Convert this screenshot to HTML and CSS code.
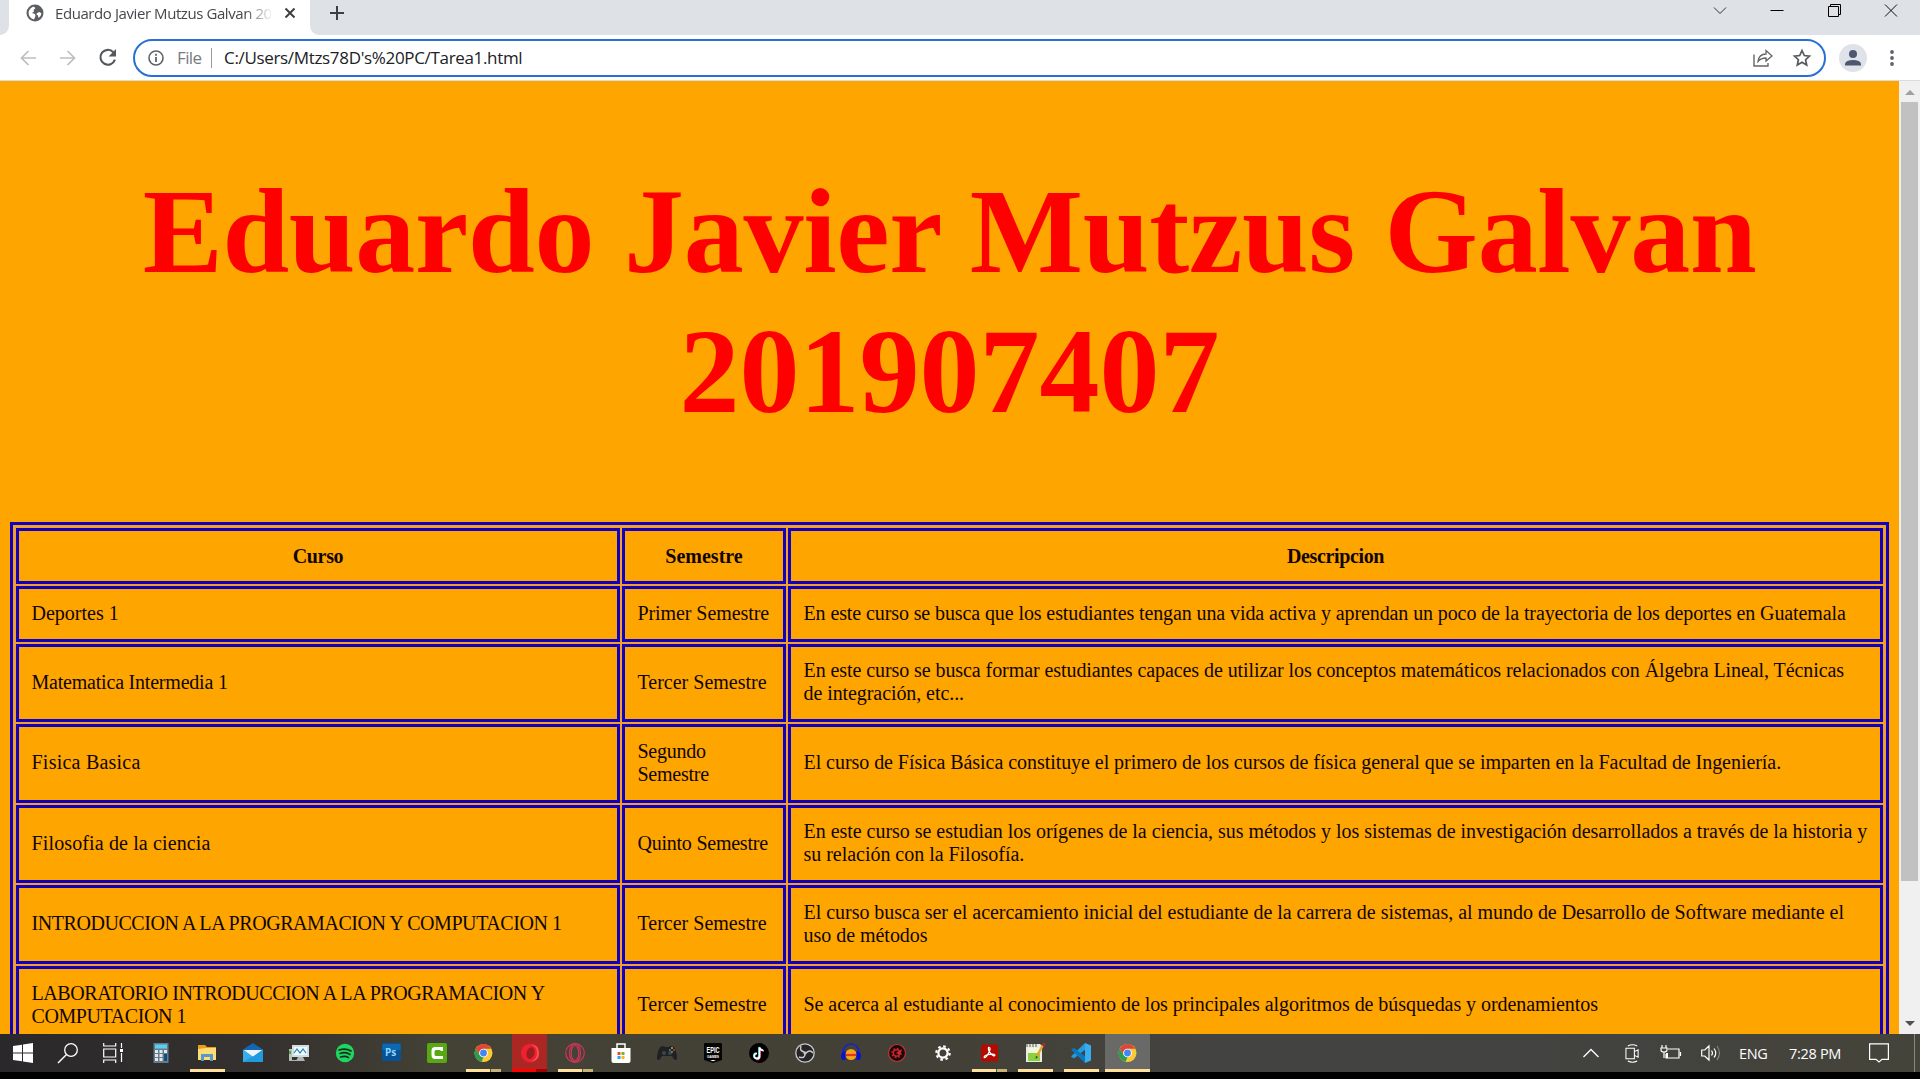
FILE: index.html
```html
<!DOCTYPE html>
<html lang="es">
<head>
<meta charset="utf-8">
<title>Eduardo Javier Mutzus Galvan 201907407</title>
<link rel="stylesheet" href="styles.css">
</head>
<body>
<header class="tabs">
  <div class="stub"></div>
  <div class="tab">
    <svg class="globe" viewBox="0 0 18 18"><circle cx="9" cy="9" r="8.500" fill="#5a5e63"/><path d="M2.500 8q1-4 5-5.500l2 1.500-2 2 .5 1.500-2 1.500 3 1 .5 2-1.500 3.500Q2.500 14 2.500 8zM11 9l2.500-1 2 1.500q-.5 3-3 4.500l-.5-2.500-1.500-1z" fill="#fff"/></svg>
    <span class="tabtitle">Eduardo Javier Mutzus Galvan 20</span>
    <svg class="close" viewBox="0 0 12 12"><path d="M1.500 1.500l9 9m0-9l-9 9" stroke="#3c4043" stroke-width="2"/></svg>
  </div>
  <div class="strip">
    <svg class="plus" viewBox="0 0 14 14"><path d="M7 0v14M0 7h14" stroke="#3c4043" stroke-width="2"/></svg>
    <div class="windowbuttons">
      <svg viewBox="0 0 14 14"><path d="M1 3.500l6 6 6-6" fill="none" stroke="#333"/></svg>
      <svg viewBox="0 0 14 14"><path d="M.5 6.500h13" stroke="#000"/></svg>
      <svg viewBox="0 0 14 14"><path d="M1.500 2.500h10v10h-10zM3.500 2V.5h10v10H12" fill="none" stroke="#000"/></svg>
      <svg viewBox="0 0 14 14"><path d="M1 .5l12 12M13 .5L1 12.500" stroke="#111"/></svg>
    </div>
  </div>
</header>
<nav class="toolbar">
  <svg class="nav" viewBox="0 0 16 16"><path d="M16 8H1.500M8.500 1L1.500 8l7 7" fill="none" stroke="#bcbec1" stroke-width="1.700"/></svg>
  <svg class="nav" viewBox="0 0 16 16"><path d="M0 8h14.500M7.500 1l7 7-7 7" fill="none" stroke="#bcbec1" stroke-width="1.700"/></svg>
  <svg class="nav reload" viewBox="0 0 16 16"><path d="M13.500 3A7 7 0 1 0 15 10" fill="none" stroke="#54585c" stroke-width="2"/><path d="M16 0v7H9z" fill="#54585c"/></svg>
  <div class="address">
    <svg class="info" viewBox="0 0 16 16"><circle cx="8" cy="8" r="7" fill="none" stroke="#5f6368" stroke-width="1.600"/><path d="M8 7v5M8 3.800v2" stroke="#5f6368" stroke-width="1.800"/></svg>
    <span class="scheme">File</span><span class="divider"></span><span class="url">C:/Users/Mtzs78D's%20PC/Tarea1.html</span>
    <svg class="share" viewBox="0 0 20 18"><path d="M1 5.500V17h14v-3" fill="none" stroke="#666" stroke-width="1.400"/><path d="M5 12.500Q6 5 13 5V1.500l6 5.500-6 5V9q-5 0-8 3.500z" fill="none" stroke="#666" stroke-width="1.300"/></svg>
    <svg class="star" viewBox="0 0 18 18"><path d="M9 1.500l2.300 5 5.200.6-3.900 3.600 1.100 5.300L9 13.300 4.300 16l1.100-5.300L1.500 7.100l5.200-.6z" fill="none" stroke="#555a5e" stroke-width="1.700"/></svg>
  </div>
  <svg class="profile" viewBox="0 0 28 28"><circle cx="14" cy="14" r="14" fill="#dfe3e9"/><circle cx="14" cy="10" r="4" fill="#4c5870"/><path d="M6 21.500v-1.800q1-3.700 8-3.700t8 3.700v1.800z" fill="#4c5870"/></svg>
  <svg class="dots" viewBox="0 0 4 16"><g fill="#5f6368"><circle cx="2" cy="2" r="1.900"/><circle cx="2" cy="8" r="1.900"/><circle cx="2" cy="14" r="1.900"/></g></svg>
</nav>
<div class="viewport">
  <main class="page">
    <h1 class="heading"><span class="name">Eduardo Javier Mutzus Galvan</span><br>201907407</h1>
    <table class="courses">
      <colgroup><col class="c1"><col class="c2"><col class="c3"></colgroup>
      <tr class="short"><th class="snug">Curso</th><th>Semestre</th><th class="snug">Descripcion</th></tr>
      <tr class="short sports"><td>Deportes 1</td><td>Primer Semestre</td><td>En este curso se busca que los estudiantes tengan una vida activa y aprendan un poco de la trayectoria de los deportes en Guatemala</td></tr>
      <tr class="mid maths"><td>Matematica Intermedia 1</td><td>Tercer Semestre</td><td>En este curso se busca formar estudiantes capaces de utilizar los conceptos matemáticos relacionados con Álgebra Lineal, Técnicas<br>de integración, etc...</td></tr>
      <tr class="tall physics"><td>Fisica Basica</td><td>Segundo<br>Semestre</td><td>El curso de Física Básica constituye el primero de los cursos de física general que se imparten en la Facultad de Ingeniería.</td></tr>
      <tr class="mid philosophy"><td>Filosofia de la ciencia</td><td>Quinto Semestre</td><td>En este curso se estudian los orígenes de la ciencia, sus métodos y los sistemas de investigación desarrollados a través de la historia y<br>su relación con la Filosofía.</td></tr>
      <tr class="tall programming"><td>INTRODUCCION A LA PROGRAMACION Y COMPUTACION 1</td><td>Tercer Semestre</td><td>El curso busca ser el acercamiento inicial del estudiante de la carrera de sistemas, al mundo de Desarrollo de Software mediante el<br>uso de métodos</td></tr>
      <tr class="tall lab"><td>LABORATORIO INTRODUCCION A LA PROGRAMACION Y<br>COMPUTACION 1</td><td>Tercer Semestre</td><td>Se acerca al estudiante al conocimiento de los principales algoritmos de búsquedas y ordenamientos</td></tr>
    </table>
  </main>
  <div class="scrollbar">
    <svg viewBox="0 0 10 5"><path d="M0 5l5-5 5 5z" fill="#a0a0a0"/></svg>
    <div class="thumb"></div>
    <svg viewBox="0 0 10 5"><path d="M0 0l5 5 5-5z" fill="#505050"/></svg>
  </div>
</div>
<footer class="taskbar">
  <div class="slot system"><svg viewBox="0 0 20 20"><path d="M0 3l9-1.300v7.800H0zM10 1.500L20 0v9.500H10zM0 10.500h9v7.800L0 17zM10 10.500h10V20l-10-1.500z" fill="#fff"/></svg></div>
  <div class="slot system"><svg viewBox="0 0 20 20"><circle cx="13" cy="7" r="6.300" fill="none" stroke="#fff" stroke-width="1.300"/><path d="M8.500 11.500L0 20" stroke="#fff" stroke-width="1.500"/></svg></div>
  <div class="slot system"><svg viewBox="0 0 20 20"><path d="M.7 0v3h12V0M.7 6h12v8h-12zM.7 20v-3h12v3M18.500 0v5M18.500 10v9" fill="none" stroke="#fff" stroke-width="1.200"/><path d="M17 6h3v3h-3z" fill="#fff"/></svg></div>
  <div class="slot first"><svg viewBox="0 0 20 20"><path d="M2.500 0h15v20h-15z" fill="#667c8b"/><path d="M4 1.500h12v4H4z" fill="#58d0f2"/><path d="M4 7h3v3H4zM8.500 7h3v3h-3zM13 7h3v3h-3zM4 11h3v3H4zM8.500 11h3v3h-3zM4 15h3v3H4zM8.500 15h3v3h-3z" fill="#e1e7ea"/><path d="M13 11h3v7h-3z" fill="#084f8b"/></svg></div>
  <div class="slot open"><svg viewBox="0 0 20 20"><path d="M1 2h7l2 2h9v13H1z" fill="#e4a116"/><path d="M1 6l8-1h10v12H1z" fill="#ffdc75"/><path d="M4 18v-7h12v7h-3v-4H7v4z" fill="#529cc9"/></svg></div>
  <div class="slot"><svg viewBox="0 0 20 20"><path d="M0 6.500L10 0l10 6.500V13H0z" fill="#1266b4"/><path d="M1 7h18l-9 7z" fill="#eef5fa"/><path d="M0 6.500l10 7 10-7V19H0z" fill="#35aeea"/><path d="M0 19l20-12.500V19z" fill="#209be0"/><path d="M1 7h18l-9 6.500z" fill="#eef5fa"/></svg></div>
  <div class="slot"><svg viewBox="0 0 20 20"><path d="M0 6h3v11H0z" fill="#b4c4b9"/><path d="M3 2h17v12H3z" fill="#d5dce0"/><path d="M5 4h13v8H5z" fill="#edf8ff"/><path d="M5 10l3-4 3 4 3-4 3 4" fill="none" stroke="#2385b9" stroke-width="1.200"/><path d="M9 14h5l2 4H7zM0 17h8v1H0z" fill="#aeb4b8"/><path d="M0 8h2v3H0z" fill="#4ca543"/></svg></div>
  <div class="slot"><svg viewBox="0 0 20 20"><circle cx="10" cy="10" r="9.200" fill="#1ed760"/><path d="M4 7q7-2 12 1M5 10.500q6-2 10 1M5.500 14q5-1.500 8 .6" fill="none" stroke="#172d1c" stroke-width="1.700" stroke-linecap="round"/></svg></div>
  <div class="slot"><svg viewBox="0 0 20 20"><rect x="1" y="0" width="19" height="18" rx="1" fill="#075297"/><path d="M1.500 1h18v6h-18z" fill="#0d68b2"/><text x="4" y="12.500" class="ps">Ps</text></svg></div>
  <div class="slot"><svg viewBox="0 0 20 20"><rect width="20" height="20" rx="2" fill="#57a812"/><path d="M16 8V4H8Q4.500 4 4.500 8v4q0 4 3.500 4h8v-3H9q-1.500 0-1.500-1.500v-3Q7.500 7 9 7h4l1 1z" fill="#fff"/></svg></div>
  <div class="slot open multi"><svg class="chrome" viewBox="0 0 20 20"><circle cx="10" cy="10" r="9.500" fill="#fcca35"/><path d="M1.800 5.200A9.500 9.500 0 0 1 18.200 5.500H10L5.800 12z" fill="#df4638"/><path d="M1.800 5.200l4.300 7.200L10 14.500l-2 4.800A9.500 9.500 0 0 1 1.800 5.200z" fill="#2d9c51"/><circle cx="10" cy="10" r="4.600" fill="#fff"/><circle cx="10" cy="10" r="3.600" fill="#4285f4"/></svg></div>
  <div class="slot open multi opera"><svg viewBox="0 0 20 20"><ellipse cx="10" cy="10" rx="9" ry="9.300" fill="#f0202f"/><path d="M11 1q8 1 8 9t-8 9q6-3 6-9t-6-9z" fill="#fa5052"/><ellipse cx="10.500" cy="10" rx="4" ry="6" fill="#9b1f20" transform="rotate(15 10 10)"/></svg></div>
  <div class="slot open multi"><svg viewBox="0 0 20 20"><g fill="none" stroke="#d2345b" stroke-width="1.200"><circle cx="10" cy="10" r="9.300"/><ellipse cx="10" cy="10" rx="5.500" ry="9"/><ellipse cx="10" cy="10" rx="3.800" ry="7.500"/></g></svg></div>
  <div class="slot"><svg viewBox="0 0 20 20"><path d="M6 6V1h8v5" fill="none" stroke="#fff" stroke-width="1.500"/><path d="M.5 5h19v13q0 2-2 2h-15q-2 0-2-2z" fill="#fff"/><path d="M6.500 9h3v3h-3z" fill="#e94f27"/><path d="M10.500 9h3v3h-3z" fill="#7db522"/><path d="M6.500 13h3v3h-3z" fill="#28a5df"/><path d="M10.500 13h3v3h-3z" fill="#f9b723"/></svg></div>
  <div class="slot"><svg viewBox="0 0 20 20"><path d="M3 4l4-1 1 1h4l1-1 4 1q3 5 3 12-2 3-5-3H5q-3 6-5 3Q0 9 3 4z" fill="#202124"/><circle cx="7" cy="10" r="2" fill="#444"/><circle cx="13" cy="10" r="2" fill="#444"/><circle cx="15" cy="5" r=".9" fill="#e9b532"/><circle cx="17" cy="7" r=".9" fill="#d54436"/><circle cx="13" cy="7" r=".9" fill="#3c93d4"/><circle cx="15" cy="9" r=".9" fill="#50b76c"/></svg></div>
  <div class="slot"><svg viewBox="0 0 20 20"><path d="M1 1q0-1 1-1h16q1 0 1 1v16l-9 3-9-3z" fill="#050505"/><text x="3.500" y="10" textLength="13" lengthAdjust="spacingAndGlyphs" class="epic">EPIC</text><text x="4" y="15" textLength="12" lengthAdjust="spacingAndGlyphs" class="games">GAMES</text><path d="M7 17h6l-3 1.200z" fill="#fff"/></svg></div>
  <div class="slot"><svg viewBox="0 0 20 20"><circle cx="10" cy="10" r="10" fill="#000"/><g fill="none" stroke-width="1.700"><path d="M10 4v9a2.600 2.600 0 1 1-2.500-3M10 4q1 3 4 3" stroke="#28ddd9"/><path d="M11 5v9a2.600 2.600 0 0 1-4 2M11 5q1 3 4 3" stroke="#f12b56"/><path d="M10.500 4.500v9a2.600 2.600 0 1 1-2.500-3M10.500 4.500q1 3 4 3" stroke="#fff"/></g></svg></div>
  <div class="slot"><svg viewBox="0 0 20 20"><circle cx="10" cy="10" r="9.200" fill="#252527" stroke="#c8c8c8" stroke-width="1.300"/><path d="M9.500 9Q4 8 6 3M11 10q4-4 7 0M10 11q0 5-6 3" fill="none" stroke="#c8c8c8" stroke-width="1.500"/><circle cx="10" cy="10" r="1.600" fill="#c8c8c8"/></svg></div>
  <div class="slot"><svg viewBox="0 0 20 20"><path d="M2 12V9a8 8 0 0 1 16 0v3" fill="none" stroke="#1421d5" stroke-width="1.600"/><circle cx="10" cy="11.500" r="5.500" fill="#f2a51c"/><path d="M5 12h10" stroke="#e73518" stroke-width="2.200" fill="none"/><path d="M0 13q0-4 4.500-5v9H2q-2-1-2-4zM20 13q0-4-4.500-5v9H18q2-1 2-4z" fill="#0b12cf"/></svg></div>
  <div class="slot"><svg viewBox="0 0 20 20"><circle cx="10" cy="10" r="8.500" fill="#180b0c" stroke="#ca3035" stroke-width="1.200"/><circle cx="9.500" cy="10" r="3.200" fill="none" stroke="#c4232a" stroke-width="1.500"/><circle cx="9.500" cy="10" r="4.500" fill="none" stroke="#c4232a" stroke-width="1.500" stroke-dasharray="1.800 1.700"/><path d="M9 10l6-4-2 6z" fill="#d8272f"/></svg></div>
  <div class="slot"><svg class="gear" viewBox="0 0 20 20"><circle cx="10" cy="10" r="5.800" fill="none" stroke="#fff" stroke-width="2.800"/><circle cx="10" cy="10" r="8.300" fill="none" stroke="#fff" stroke-width="2.800" stroke-dasharray="3.260 3.260"/></svg></div>
  <div class="slot open multi"><svg class="pdf" viewBox="0 0 20 20"><rect x="1" y="1" width="18" height="18" rx="3" fill="#b30b00"/><path d="M9 4q3 0 .5 5Q7 15 4.500 15q-1-2 4-3.200 6-1.500 7.200.5-.5 2-4-1.300Q8 7 9 4z" fill="none" stroke="#fff" stroke-width="1.300"/></svg></div>
  <div class="slot open"><svg viewBox="0 0 20 20"><path d="M1 1h14l2 2v16H1z" fill="#e7ece6"/><path d="M3 8h12v10H3z" fill="#8bd03e"/><path d="M3 5h12v5H3z" fill="#f4f6d9"/><path d="M2 1v3M5 1v3M8 1v3M11 1v3" stroke="#555"/><path d="M12 13l6-11" stroke="#e6a22b" stroke-width="2.500"/><path d="M18 3l1.500-3" stroke="#b4292a" stroke-width="2.500"/><path d="M10.500 16l.5-3 2 1z" fill="#333"/></svg></div>
  <div class="slot open"><svg viewBox="0 0 20 20"><path d="M0 13.500L14 0l1 6L3 15.500z" fill="#239be1"/><path d="M0 6.500l3-1.500L15 14l-1 6z" fill="#087ac3"/><path d="M14 0l6 2.500v15L14 20z" fill="#38aef0"/></svg></div>
  <div class="slot open active"><svg class="chrome" viewBox="0 0 20 20"><circle cx="10" cy="10" r="9.500" fill="#fcca35"/><path d="M1.800 5.200A9.500 9.500 0 0 1 18.200 5.500H10L5.800 12z" fill="#df4638"/><path d="M1.800 5.200l4.300 7.200L10 14.500l-2 4.800A9.500 9.500 0 0 1 1.800 5.200z" fill="#2d9c51"/><circle cx="10" cy="10" r="4.600" fill="#fff"/><circle cx="10" cy="10" r="3.600" fill="#4285f4"/></svg></div>
  <div class="tray">
    <svg class="up" viewBox="0 0 16 10"><path d="M.5 9L8 1.500 15.500 9" fill="none" stroke="#fff" stroke-width="1.300"/></svg>
    <svg class="meet" viewBox="0 0 16 20"><path d="M1 4.500h9v11H1zM10 8l4-2v8l-4-2M3 2q5-2.500 10 0M3 18q5 2.500 10 0" fill="none" stroke="#fff" stroke-width="1.100"/></svg>
    <svg class="battery" viewBox="0 0 20 16"><path d="M7 4h11v9H5V9M19.500 7v4M1 0v3M5 0v3M0 3h6v2q0 2-3 2T0 5zM3 7v6" fill="none" stroke="#fff" stroke-width="1.200"/><path d="M5 8h2v5H5z" fill="#fff"/></svg>
    <svg class="sound" viewBox="0 0 20 16"><path d="M.7 5h3L8 1v14l-4.300-4h-3zM10.500 5.500q2 2.500 0 5M13 3.500q3.500 4.500 0 9" fill="none" stroke="#fff" stroke-width="1.200"/><path d="M16 1q5 7 0 14" fill="none" stroke="#888" stroke-width="1.100"/></svg>
    <span class="lang">ENG</span><span class="clock">7:28 PM</span>
    <svg class="notice" viewBox="0 0 20 20"><path d="M.6.8h18.800v15.500H13l-3 2.700-3-2.700H.6z" fill="none" stroke="#fff" stroke-width="1.200"/></svg>
    <span class="peek"></span>
  </div>
</footer>
</body>
</html>
```
FILE: styles.css
```css
* { box-sizing: border-box; }
body { margin: 0; width: 1920px; height: 1079px; overflow: hidden; background: #000; font-family: "Open Sans", sans-serif; display: flex; flex-direction: column; }
svg { display: block; flex: none; overflow: visible; }

/* Browser chrome */
.tabs { height: 35px; flex: none; background: #fff; display: flex; }
.stub { width: 9px; background: #dee1e6; border-bottom-right-radius: 9px; }
.tab { width: 281px; flex: 0 0 281px; display: flex; padding: 4px 0 0 17px; }
.globe { width: 18px; height: 18px; }
.tab { width: 301px; flex-basis: 301px; }
.tabtitle { width: 222px; flex: none; margin: -2px 0 0 11px; font-size: 15px; line-height: 22px; letter-spacing: -.42px; color: #45494d; white-space: nowrap; -webkit-mask-image: linear-gradient(90deg, #000 190px, transparent 218px); }
.close { width: 12px; height: 12px; margin: 3px 0 0 7px; }
.strip { flex: 1; background: #dee1e6; border-bottom-left-radius: 9px; display: flex; }
.plus { width: 14px; height: 14px; margin: 6px 0 0 20px; }
.windowbuttons { margin-left: auto; display: flex; gap: 43px; padding: 4px 22px 0 0; }
.windowbuttons svg { width: 14px; height: 14px; }
.toolbar { height: 46px; flex: none; background: #fff; display: flex; align-items: center; padding-left: 20px; border-bottom: 1px solid #dadce0; }
.nav { width: 16px; height: 16px; margin-right: 24px; }
.reload { width: 17px; height: 17px; margin: 0 17px 0 -1px; }
.address { width: 1693px; height: 38px; border: 2px solid #2870d8; border-radius: 19px; display: flex; align-items: center; padding: 0 13px; }
.info { width: 16px; height: 16px; }
.scheme, .url { font-size: 17px; line-height: 24px; white-space: nowrap; }
.scheme { color: #777b80; width: 24px; margin-left: 13px; letter-spacing: -.6px; }
.divider { width: 1px; height: 20px; background: #999; margin: 0 12px 0 10px; }
.url { color: #202124; letter-spacing: -.33px; }
.share { width: 20px; height: 18px; margin-left: auto; }
.star { width: 18px; height: 18px; margin: 0 0 0 20px; }
.profile { width: 28px; height: 28px; margin-left: 13px; }
.dots { width: 4px; height: 16px; margin-left: 23px; }

/* Document */
.viewport { height: 953px; height: 953px; flex: none; display: flex; overflow: hidden; }
.page { width: 1899px; background: #ffa500; padding: 0 10px; font: 20px/23px "Liberation Serif", serif; color: #100600; overflow: hidden; }
.heading { margin: 81px 0; height: 279px; font-size: 120px; line-height: 140px; text-align: center; color: #f00; white-space: nowrap; }
.name { letter-spacing: -.27px; }
.courses { width: 1879px; table-layout: fixed; background: #f2a128; border: 3px solid #1200bf; border-collapse: separate; border-spacing: 2px; padding: 1px; }
.c1 { width: 604px; }
.c2 { width: 164px; }
.c3 { width: 1095px; }
th, td { background: #ffa500; border: 3px solid #1200bf; text-align: left; white-space: nowrap; }
th { padding: 0 12.5px; text-align: center; }
td { padding: 0 12.5px 2px; }
.short { height: 56px; }
.mid { height: 78px; }
.tall { height: 79px; }

/* Tracking of each course row */
.snug { letter-spacing: -.35px; }
.sports td:nth-child(2) { letter-spacing: -.08px; }
.sports td:nth-child(3) { letter-spacing: -.103px; }
.maths td:nth-child(1) { letter-spacing: -.21px; }
.maths td:nth-child(3) { letter-spacing: -.076px; }
.physics td:nth-child(1) { letter-spacing: .23px; }
.physics td:nth-child(2) { letter-spacing: -.25px; }
.physics td:nth-child(3) { letter-spacing: -.052px; }
.philosophy td:nth-child(1) { letter-spacing: .13px; }
.philosophy td:nth-child(2) { letter-spacing: -.24px; }
.philosophy td:nth-child(3) { letter-spacing: -.027px; }
.programming td:nth-child(1) { letter-spacing: -.44px; }
.programming td:nth-child(3) { letter-spacing: -.027px; }
.lab td:nth-child(1) { letter-spacing: -.42px; }
.lab td:nth-child(3) { letter-spacing: -.06px; }

.scrollbar { width: 21px; background: #f0f0f0; display: flex; flex-direction: column; align-items: center; padding: 9px 0 8px; }
.scrollbar svg { width: 10px; height: 5px; }
.thumb { width: 17px; height: 779px; background: #c1c1c1; margin: 7px 0 auto; }

/* Taskbar */
.taskbar { height: 38px; flex: none; background: linear-gradient(90deg, #2b282b, #34312f 14%, #444235 23%, #434137 50%, #434342 66%, #42433f 84%, #45443a); display: flex; }
.slot { width: 46px; height: 38px; flex: none; padding-top: 9px; display: flex; justify-content: center; background-repeat: no-repeat; background-position: 6px 100%; background-size: 35px 3px; }
.slot svg { width: 20px; height: 20px; }
.system { width: 45px; }
.first { margin-left: 3px; }
.open { background-image: linear-gradient(#ffe09b, #ffe09b); }
.multi { background-image: linear-gradient(90deg, #ffe09b 24px, #55523f 24px, #55523f 25px, #c9b277 25px); }
.opera { width: 35px; margin: 0 5px 0 6px; background-color: #ab2723; background-position: 0 100%; background-image: linear-gradient(90deg, #f00 24px, #a40000 24px); }
.active { width: 45px; margin-left: 1px; background-color: #696968; background-position: 0 100%; background-size: 45px 3px; }
.slot .chrome, .slot .pdf { width: 19px; }
.slot .gear { width: 16px; }
.ps { font: 700 10px "Open Sans", sans-serif; fill: #8dd5ff; }
.epic { font: 700 9px "Liberation Sans", sans-serif; fill: #fff; }
.games { font: 700 4px "Liberation Sans", sans-serif; fill: #fff; }
.tray { margin-left: auto; display: flex; align-items: center; color: #fff; font-size: 14.5px; letter-spacing: -.3px; }
.up { width: 16px; height: 10px; margin-right: 26px; }
.meet { width: 15px; height: 19px; margin-right: 21px; }
.battery { width: 20px; height: 16px; margin-right: 20px; }
.sound { width: 20px; height: 16px; margin-right: 18px; }
.lang { width: 29px; margin-right: 21px; white-space: nowrap; }
.clock { width: 52px; margin-right: 28px; white-space: nowrap; }
.notice { width: 20px; height: 20px; margin-right: 25px; }
.peek { width: 6px; height: 38px; border-left: 1px solid #88877f; }
```
